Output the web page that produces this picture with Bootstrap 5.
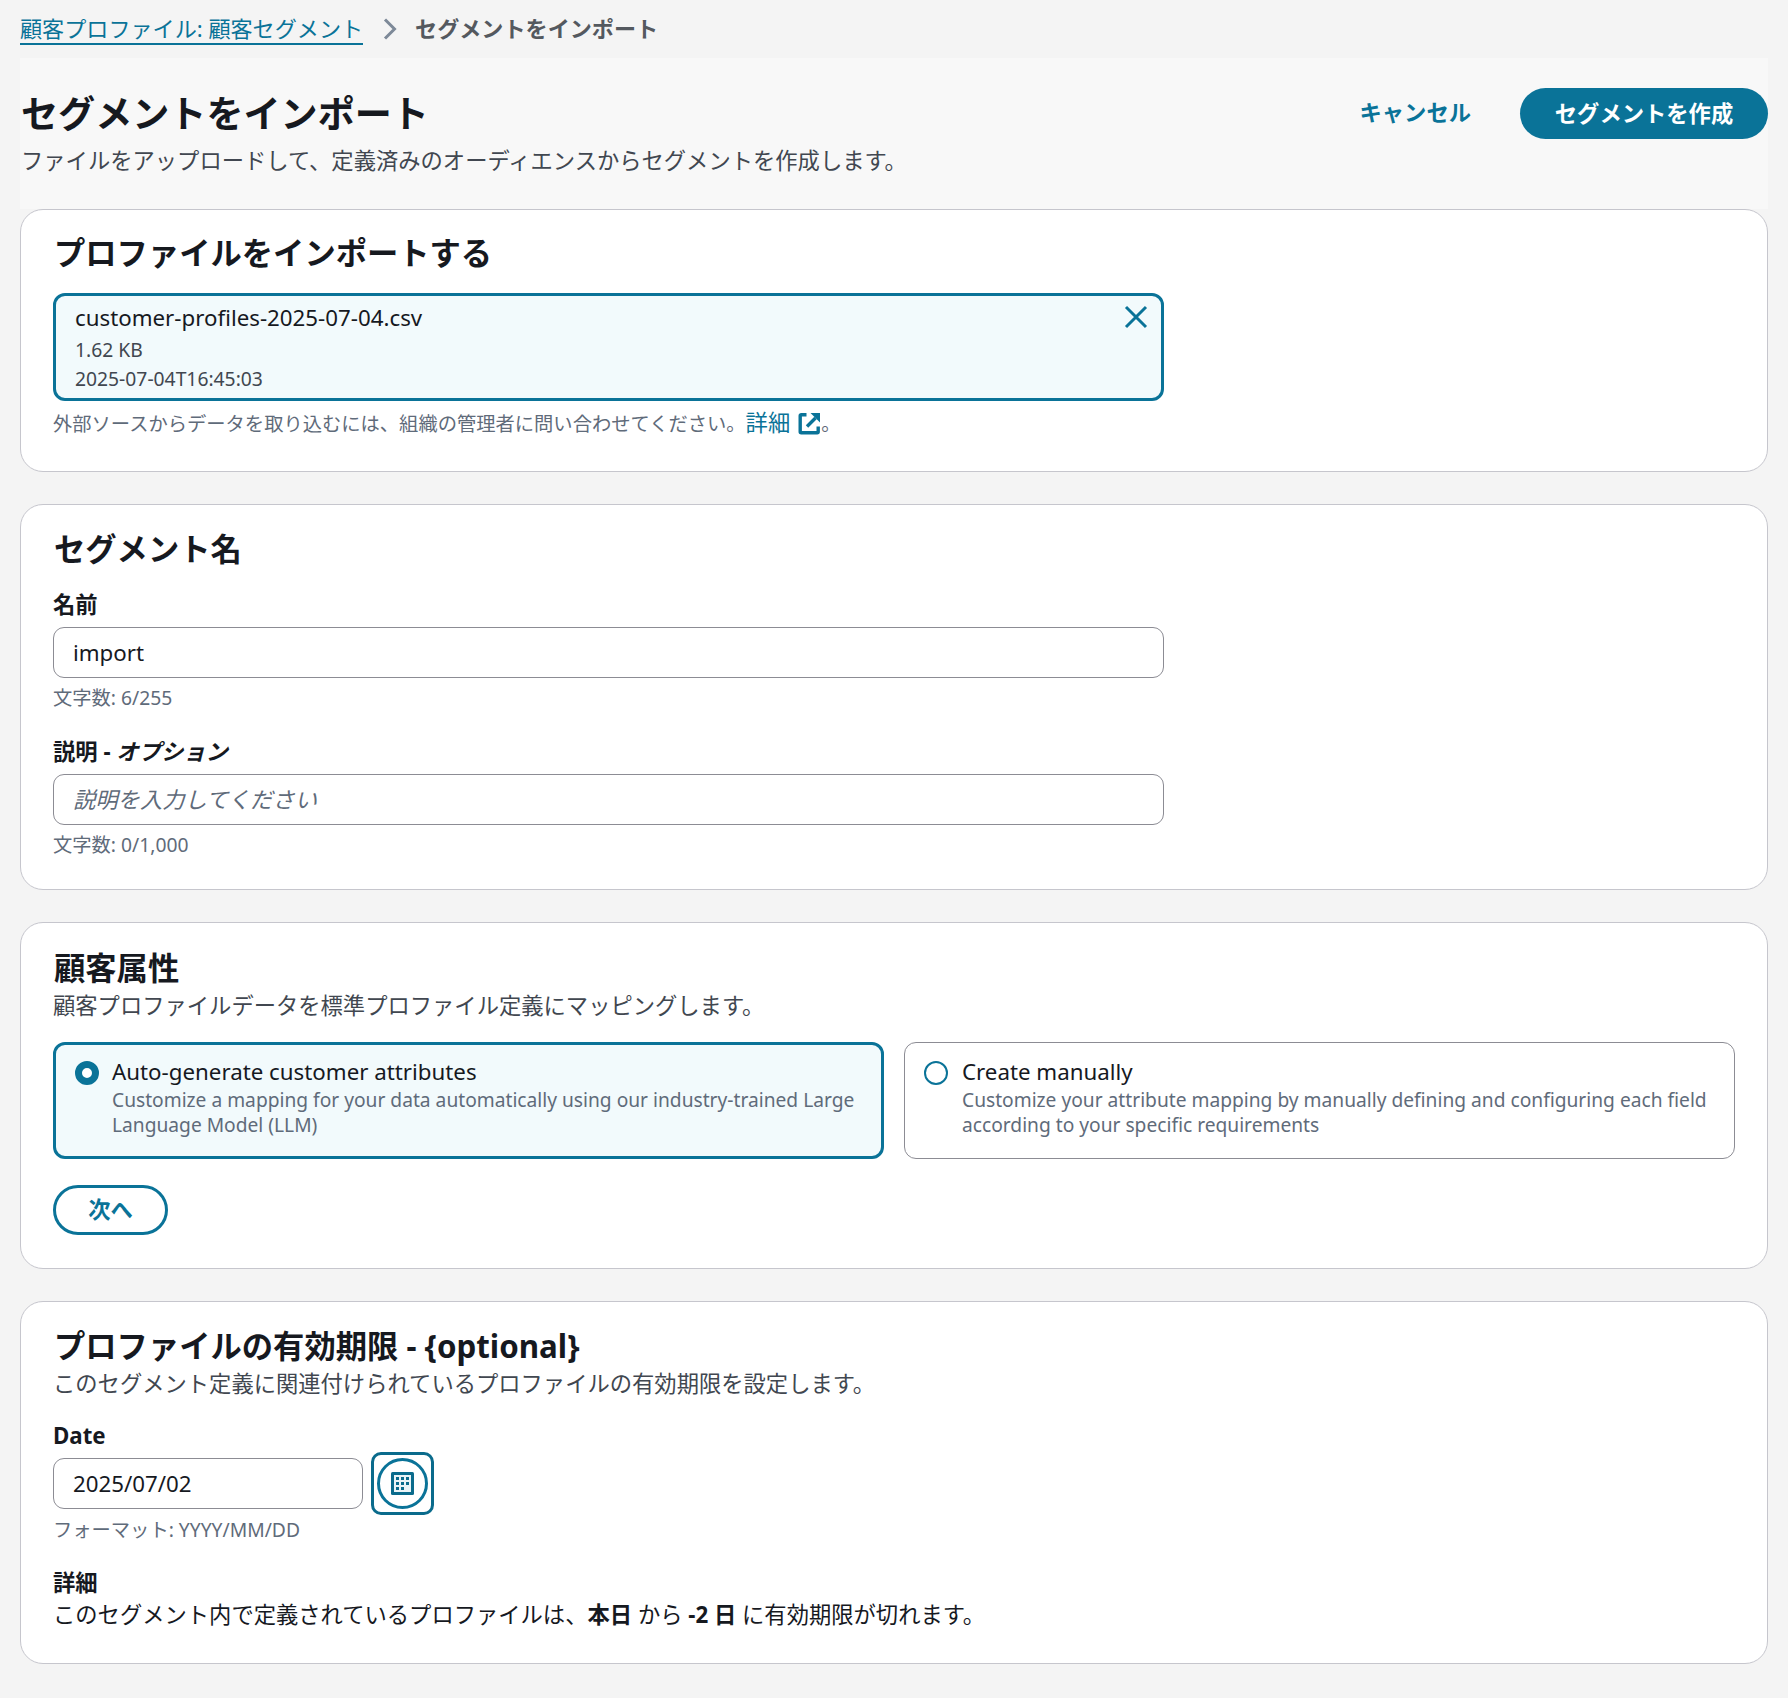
<!DOCTYPE html>
<html lang="ja">
<head>
<meta charset="utf-8">
<title>セグメントをインポート</title>
<link rel="stylesheet" href="https://cdn.jsdelivr.net/npm/bootstrap@5.3.0/dist/css/bootstrap.min.css">
<style>
:root{--teal:#0a7398;--ink:#16191f;--mute:#5f6b7a;}
body{background:#f4f4f4;color:var(--ink);font-family:"Noto Sans","Noto Sans CJK JP",sans-serif;font-size:22.3px;line-height:28px;}
.page-wrap{padding:0 20px 35px 20px;}
.crumbs{height:58px;padding-top:14px;font-size:22.1px;}
.crumbs a{color:var(--teal);text-decoration:none;border-bottom:2px solid var(--teal);padding-bottom:1px;display:inline-block;line-height:28px;}
.crumbs .cur{color:#54595f;font-weight:700;}
.crumbs svg{margin:4px 18px 0 20px;}
.head-band{background:#f8f8f8;height:151px;padding:31px 0 0 1px;}
.head-band h1{font-size:37.1px;line-height:50px;font-weight:700;margin:0;}
.head-band p{margin:8px 0 0;color:#414750;line-height:28px;}
.act-col{margin-top:-1px;}
.act-cancel{color:var(--teal);font-weight:700;text-decoration:none;margin:11px 49px 0 0;}
.act-primary{background:var(--teal);color:#fff;font-weight:700;border:0;border-radius:26px;height:51px;width:248px;font-size:22.3px;padding:0;}
.panel{background:#fff;border:1px solid #c6c6cd;border-radius:23px;padding:0 32px;margin-bottom:32px;}
.panel h2{font-size:31.3px;line-height:42px;font-weight:700;margin:0 0 0 1px;}
.panel1{height:263px;padding-top:22px;}
.panel2{height:386px;padding-top:23px;}
.panel3{height:347px;padding-top:24px;}
.panel4{height:363px;padding-top:23px;}
.file-box{width:1111px;height:108px;border:3px solid var(--teal);border-radius:12px;background:#f2fafc;margin-top:19px;padding:5px 19px;position:relative;}
.file-box .fn{line-height:33px;margin-bottom:1px;}
.file-box .fm{font-size:19.3px;line-height:29px;color:#414750;}
.file-x{position:absolute;top:8px;right:12px;width:26px;height:26px;}
.hint{font-size:19.3px;line-height:26px;color:var(--mute);}
.hint a{color:var(--teal);text-decoration:none;font-size:22.3px;}
.hint svg{vertical-align:-4px;margin-left:8px;}
.hint-first{margin-top:9px;}
.hint-gap{margin-top:7px;}
.hint-date{margin-top:2px;}
.fld-label{font-weight:700;line-height:28px;display:block;margin:0;}
.lab-first{margin-top:21px;}
.lab-second{margin-top:27px;}
.lab-date{margin-top:24px;}
.lab-detail{margin-top:26px;}
.fld-gap{margin-top:8px;}
.date-row{margin-top:2px;}
.fld{display:block;width:1111px;height:51px;border:1px solid #8c8c94;border-radius:11px;background:#fff;color:var(--ink);font-size:22.3px;padding:0 19px;box-shadow:none;}
.fld::placeholder{color:#5f6b7a;font-style:italic;}
.attr-desc{line-height:28px;color:#414750;margin-top:3px;}
.opt-row{display:grid;grid-template-columns:831px 831px;column-gap:20px;margin-top:22px;}
.opt{height:117px;border:1px solid #8c8c94;border-radius:12px;padding:15px 20px 0 19px;display:flex;gap:14px;margin:0;}
.opt.on{border:3px solid var(--teal);background:#f2fafc;padding:13px 18px 0 19px;gap:13px;}
.opt .form-check-input{flex:0 0 24px;width:24px;height:24px;margin:3px 0 0;border:2px solid var(--teal);background:#fff;}
.opt.on .form-check-input{border:7px solid var(--teal);background-image:none;background-color:#fff;}
.opt-t{line-height:28px;}
.opt-d{font-size:19.2px;line-height:24.5px;color:var(--mute);margin-top:2px;}
.next-btn{width:115px;height:50px;border:3px solid var(--teal);border-radius:25px;background:#fff;color:var(--teal);font-weight:700;font-size:22.3px;padding:0;margin-top:26px;display:block;}
.date-fld{width:310px;}
.cal-btn{width:63px;height:63px;border:3px solid #0a6b8c;border-radius:10px;background:#fff;padding:0;margin-left:8px;display:flex;align-items:center;justify-content:center;}
.cal-ring{width:51px;height:51px;border:3px solid var(--teal);border-radius:50%;display:flex;align-items:center;justify-content:center;}
</style>
</head>
<body>
<div class="page-wrap">
  <nav class="crumbs d-flex align-items-start">
    <a href="#">顧客プロファイル: 顧客セグメント</a>
    <svg width="14" height="22" viewBox="0 0 14 22"><path d="M2 1.5l9.5 9.5L2 20.5" fill="none" stroke="#7d8998" stroke-width="3"/></svg>
    <span class="cur">セグメントをインポート</span>
  </nav>
  <header class="head-band d-flex justify-content-between">
    <div>
      <h1>セグメントをインポート</h1>
      <p>ファイルをアップロードして、定義済みのオーディエンスからセグメントを作成します。</p>
    </div>
    <div class="d-flex align-items-start act-col">
      <a href="#" class="act-cancel">キャンセル</a>
      <button class="btn act-primary" type="button">セグメントを作成</button>
    </div>
  </header>

  <section class="panel panel1">
    <h2>プロファイルをインポートする</h2>
    <div class="file-box">
      <div class="fn">customer-profiles-2025-07-04.csv</div>
      <div class="fm">1.62 KB</div>
      <div class="fm">2025-07-04T16:45:03</div>
      <svg class="file-x" viewBox="0 0 26 26"><path d="M3 3l20 20M23 3L3 23" stroke="#0a7398" stroke-width="3" fill="none"/></svg>
    </div>
    <div class="hint hint-first">外部ソースからデータを取り込むには、組織の管理者に問い合わせてください。<a href="#">詳細<svg width="23" height="23" viewBox="0 0 23 23"><path d="M8.5 2.7H3.2a1 1 0 0 0-1 1v16a1 1 0 0 0 1 1h16a1 1 0 0 0 1-1V14.5" fill="none" stroke="#0a7398" stroke-width="3.4"/><path d="M9 14.5L17.5 6" fill="none" stroke="#0a7398" stroke-width="3.4"/><path d="M12.5 1h9.5v9.5z" fill="#0a7398"/></svg></a>。</div>
  </section>

  <section class="panel panel2">
    <h2>セグメント名</h2>
    <label class="fld-label lab-first" for="nm">名前</label>
    <input id="nm" class="form-control fld fld-gap" value="import">
    <div class="hint hint-gap">文字数: 6/255</div>
    <label class="fld-label lab-second" for="ds">説明 - <i>オプション</i></label>
    <input id="ds" class="form-control fld fld-gap" placeholder="説明を入力してください">
    <div class="hint hint-gap">文字数: 0/1,000</div>
  </section>

  <section class="panel panel3">
    <h2>顧客属性</h2>
    <div class="attr-desc">顧客プロファイルデータを標準プロファイル定義にマッピングします。</div>
    <div class="opt-row">
      <label class="opt on">
        <input class="form-check-input" type="radio" name="a" checked>
        <span><span class="opt-t d-block">Auto-generate customer attributes</span><span class="opt-d d-block">Customize a mapping for your data automatically using our industry-trained Large Language Model (LLM)</span></span>
      </label>
      <label class="opt">
        <input class="form-check-input" type="radio" name="a">
        <span><span class="opt-t d-block">Create manually</span><span class="opt-d d-block">Customize your attribute mapping by manually defining and configuring each field according to your specific requirements</span></span>
      </label>
    </div>
    <button class="btn next-btn" type="button">次へ</button>
  </section>

  <section class="panel panel4 mb-0">
    <h2>プロファイルの有効期限 - {optional}</h2>
    <div class="attr-desc">このセグメント定義に関連付けられているプロファイルの有効期限を設定します。</div>
    <label class="fld-label lab-date" for="dt">Date</label>
    <div class="d-flex align-items-center date-row">
      <input id="dt" class="form-control fld date-fld" value="2025/07/02">
      <button class="btn cal-btn" type="button"><span class="cal-ring"><svg width="23" height="23" viewBox="0 0 23 23"><rect width="23" height="23" rx="1.5" fill="#0a6b8c"/><rect x="3" y="3" width="17" height="17" fill="#eaf4f7"/><g fill="#0a6b8c"><rect x="5" y="5" width="3" height="3"/><rect x="10" y="5" width="3" height="3"/><rect x="15" y="5" width="3" height="3"/><rect x="5" y="10" width="3" height="3"/><rect x="10" y="10" width="3" height="3"/><rect x="15" y="10" width="3" height="3"/><rect x="5" y="15" width="3" height="3"/><rect x="10" y="15" width="3" height="3"/></g></svg></span></button>
    </div>
    <div class="hint hint-date">フォーマット: YYYY/MM/DD</div>
    <div class="fld-label lab-detail">詳細</div>
    <div class="mt-1">このセグメント内で定義されているプロファイルは、<b>本日</b> から <b>-2 日</b> に有効期限が切れます。</div>
  </section>
</div>
<script src="https://cdn.jsdelivr.net/npm/bootstrap@5.3.0/dist/js/bootstrap.bundle.min.js"></script>
</body>
</html>
